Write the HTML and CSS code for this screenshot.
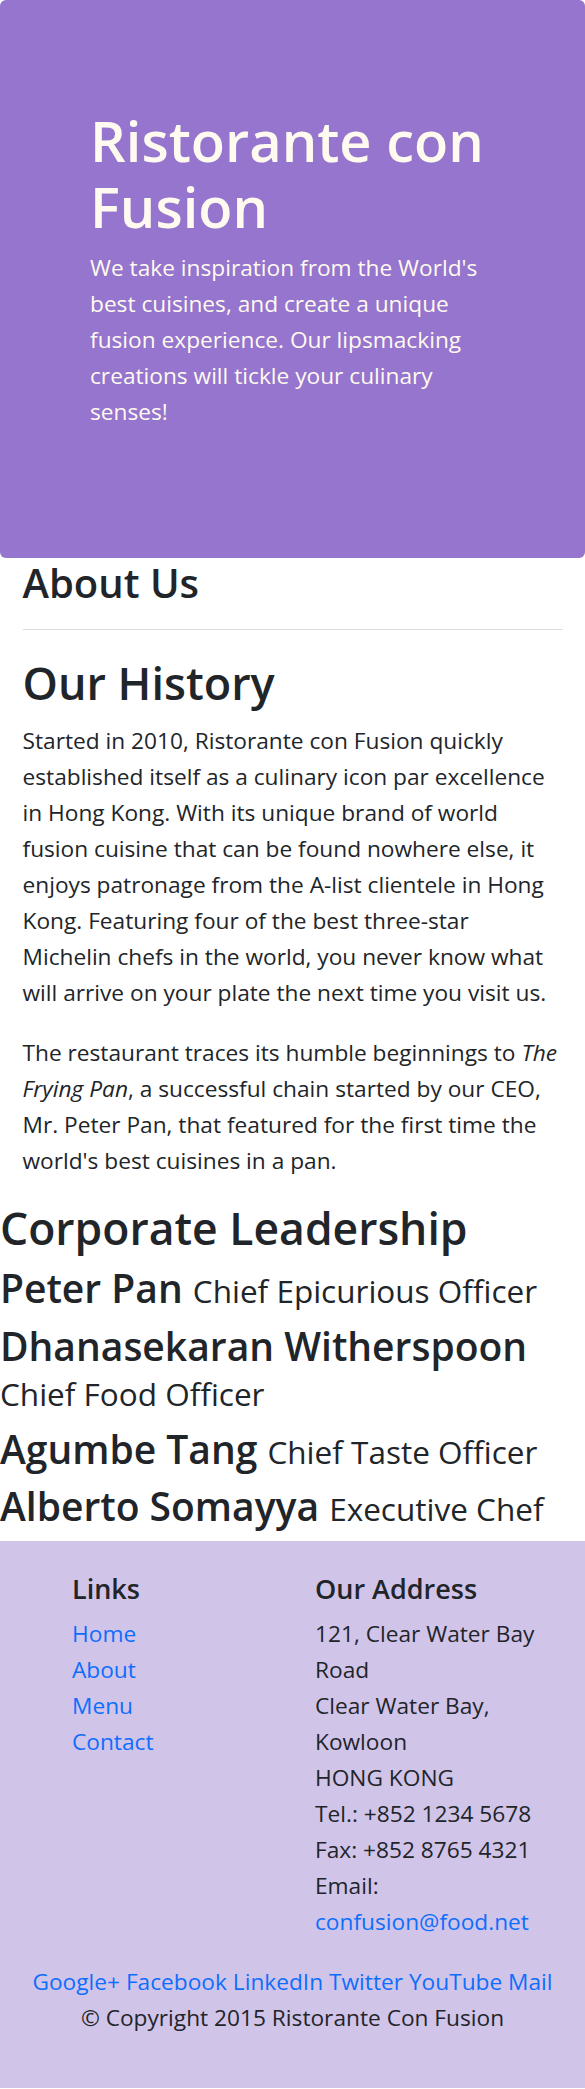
FILE: index.html
```html
<!DOCTYPE html>
<html lang="en">
<head>
<meta charset="utf-8">
<title>Ristorante con Fusion: About Us</title>
<link rel="stylesheet" href="styles.css">
</head>
<body>
<header class="jumbotron">
  <div class="jumbotron-inner">
    <h1 class="brand-title">Ristorante con Fusion</h1>
    <p class="brand-lead">We take inspiration from the World's best cuisines, and create a unique fusion experience. Our lipsmacking creations will tickle your culinary senses!</p>
  </div>
</header>
<main>
  <section class="about">
    <h3 class="page-title">About Us</h3>
    <hr class="divider">
    <h2 class="section-title">Our History</h2>
    <p class="text">Started in 2010, Ristorante con Fusion quickly established itself as a culinary icon par excellence in Hong Kong. With its unique brand of world fusion cuisine that can be found nowhere else, it enjoys patronage from the A-list clientele in Hong Kong. Featuring four of the best three-star Michelin chefs in the world, you never know what will arrive on your plate the next time you visit us.</p>
    <p class="text">The restaurant traces its humble beginnings to <em>The Frying Pan</em>, a successful chain started by our CEO, Mr. Peter Pan, that featured for the first time the world's best cuisines in a pan.</p>
  </section>
  <section class="leadership">
    <h1 class="leadership-title">Corporate Leadership</h1>
    <h2 class="leader">Peter Pan <small>Chief Epicurious Officer</small></h2>
    <h2 class="leader">Dhanasekaran Witherspoon <small>Chief Food Officer</small></h2>
    <h2 class="leader">Agumbe Tang <small>Chief Taste Officer</small></h2>
    <h2 class="leader">Alberto Somayya <small>Executive Chef</small></h2>
  </section>
</main>
<footer class="footer">
  <div class="footer-row">
    <div class="footer-links">
      <h5 class="footer-heading">Links</h5>
      <ul class="link-list">
        <li><a href="#">Home</a></li>
        <li><a href="#">About</a></li>
        <li><a href="#">Menu</a></li>
        <li><a href="#">Contact</a></li>
      </ul>
    </div>
    <div class="footer-address">
      <h5 class="footer-heading">Our Address</h5>
      <address class="address">121, Clear Water Bay Road<br>Clear Water Bay, Kowloon<br>HONG KONG<br>Tel.: +852 1234 5678<br>Fax: +852 8765 4321<br>Email: <a href="#">confusion@food.net</a></address>
    </div>
  </div>
  <div class="social">
    <a href="#">Google+</a> <a href="#">Facebook</a> <a href="#">LinkedIn</a> <a href="#">Twitter</a> <a href="#">YouTube</a> <a href="#">Mail</a>
  </div>
  <p class="copyright">© Copyright 2015 Ristorante Con Fusion</p>
</footer>
</body>
</html>
```

FILE: styles.css
```css
html, body {
  margin: 0;
  padding: 0;
}

body {
  font-family: "Open Sans", "Noto Sans", sans-serif;
  font-size: 22.7px;
  line-height: 36px;
  color: #212529;
  background: #ffffff;
}

a {
  color: #0d6efd;
  text-decoration: none;
}

/* Jumbotron */
.jumbotron {
  background: #9575cd;
  color: #fffaf0;
  padding: 107px 45px 104px;
  border-radius: 6px;
}

.jumbotron-inner {
  padding: 0 45px;
}

.brand-title {
  margin: 0 0 11px;
  font-size: 56px;
  line-height: 66px;
  font-weight: 600;
}

.brand-lead {
  margin: 0 0 24px;
}

/* About */
.about {
  padding: 0 22.5px;
}

.page-title {
  margin: 0;
  font-size: 40px;
  line-height: 50px;
  font-weight: 600;
}

.divider {
  margin: 21px 0 25px;
  border: 0;
  border-top: 1px solid #dedede;
  height: 0;
}

.section-title {
  margin: 0 0 12px;
  font-size: 45px;
  line-height: 56px;
  font-weight: 600;
}

.text {
  margin: 0 0 24px;
}

/* Leadership */
.leadership-title {
  margin: 0 0 12px;
  font-size: 44.5px;
  line-height: 50px;
  font-weight: 600;
}

.leader {
  margin: 0 0 12px;
  font-size: 39px;
  line-height: 45.6px;
  font-weight: 600;
}

.leader small {
  font-size: 31.5px;
  line-height: 1;
  font-weight: 400;
}

/* Footer */
.footer {
  background: #d1c4e9;
  padding: 30px 0 28px;
}

.footer-row {
  display: flex;
  padding: 0 22.5px 0 72px;
}

.footer-links {
  width: 243px;
  flex: none;
}

.footer-address {
  flex: 1;
}

.footer-heading {
  margin: 0 0 9px;
  font-size: 27px;
  line-height: 36px;
  font-weight: 600;
}

.link-list {
  list-style: none;
  margin: 0;
  padding: 0;
}

.address {
  font-style: normal;
  margin: 0 0 24px;
}

.social {
  text-align: center;
  padding: 0 22.5px;
}

.copyright {
  text-align: center;
  margin: 0 0 24px;
}
```
